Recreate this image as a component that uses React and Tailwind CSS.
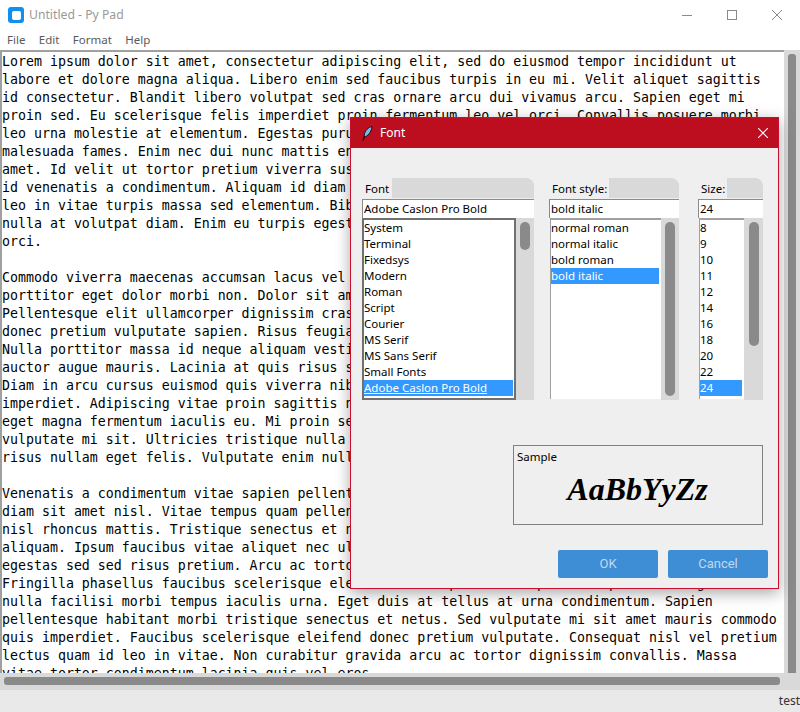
const lines = [
"Lorem ipsum dolor sit amet, consectetur adipiscing elit, sed do eiusmod tempor incididunt ut",
"labore et dolore magna aliqua. Libero enim sed faucibus turpis in eu mi. Velit aliquet sagittis",
"id consectetur. Blandit libero volutpat sed cras ornare arcu dui vivamus arcu. Sapien eget mi",
"proin sed. Eu scelerisque felis imperdiet proin fermentum leo vel orci. Convallis posuere morbi",
"leo urna molestie at elementum. Egestas purus viverra accumsan in nisl nisi scelerisque eu",
"malesuada fames. Enim nec dui nunc mattis enim ut tellus elementum sagittis vitae et leo duis",
"amet. Id velit ut tortor pretium viverra suspendisse potenti nullam ac tortor vitae purus",
"id venenatis a condimentum. Aliquam id diam maecenas ultricies mi eget mauris pharetra et",
"leo in vitae turpis massa sed elementum. Bibendum est ultricies integer quis auctor elit sed",
"nulla at volutpat diam. Enim eu turpis egestas pretium aenean pharetra magna ac placerat",
"orci.",
" ",
"Commodo viverra maecenas accumsan lacus vel facilisis volutpat est velit egestas dui id ornare",
"porttitor eget dolor morbi non. Dolor sit amet consectetur adipiscing elit pellentesque",
"Pellentesque elit ullamcorper dignissim cras tincidunt lobortis feugiat vivamus at augue eget",
"donec pretium vulputate sapien. Risus feugiat in ante metus dictum at tempor commodo",
"Nulla porttitor massa id neque aliquam vestibulum morbi blandit cursus risus at ultrices",
"auctor augue mauris. Lacinia at quis risus sed vulputate odio ut enim blandit volutpat",
"Diam in arcu cursus euismod quis viverra nibh cras pulvinar mattis nunc sed blandit libero",
"imperdiet. Adipiscing vitae proin sagittis nisl rhoncus mattis rhoncus urna neque viverra",
"eget magna fermentum iaculis eu. Mi proin sed libero enim sed faucibus turpis in eu mi",
"vulputate mi sit. Ultricies tristique nulla aliquet enim tortor at auctor urna nunc id",
"risus nullam eget felis. Vulputate enim nulla aliquet porttitor lacus luctus accumsan",
" ",
"Venenatis a condimentum vitae sapien pellentesque habitant morbi tristique senectus et netus",
"diam sit amet nisl. Vitae tempus quam pellentesque nec nam aliquam sem et tortor consequat",
"nisl rhoncus mattis. Tristique senectus et netus et malesuada fames ac turpis egestas sed",
"aliquam. Ipsum faucibus vitae aliquet nec ullamcorper sit amet risus nullam eget felis eget",
"egestas sed sed risus pretium. Arcu ac tortor dignissim convallis aenean et tortor at risus",
"Fringilla phasellus faucibus scelerisque eleifend donec pretium vulputate sapien nec sagittis",
"nulla facilisi morbi tempus iaculis urna. Eget duis at tellus at urna condimentum. Sapien",
"pellentesque habitant morbi tristique senectus et netus. Sed vulputate mi sit amet mauris commodo",
"quis imperdiet. Faucibus scelerisque eleifend donec pretium vulputate. Consequat nisl vel pretium",
"lectus quam id leo in vitae. Non curabitur gravida arcu ac tortor dignissim convallis. Massa",
"vitae tortor condimentum lacinia quis vel eros",
];

const fonts = ["System","Terminal","Fixedsys","Modern","Roman","Script","Courier","MS Serif","MS Sans Serif","Small Fonts","Adobe Caslon Pro Bold"];
const styles = ["normal roman","normal italic","bold roman","bold italic"];
const sizes = ["8","9","10","11","12","14","16","18","20","22","24"];

function Column({ label, labelW, value, items, selected, listW, strong, underline, thumbH, width }) {
  return (
    <div className="flex flex-col" style={{ width }}>
      <div className="flex h-5 rounded-tr-lg bg-[#d9d9d9]">
        <div className="flex h-5 items-end whitespace-nowrap bg-[#efefef] pb-px pl-[3px]" style={{ width: labelW }}>{label}</div>
      </div>
      <div className="mt-px h-[19px] border-t border-l border-[#8a8a8a] bg-white pl-px leading-[18px]">{value}</div>
      <div className="flex h-[182px]">
        <div
          className={`shrink-0 overflow-hidden bg-white ${strong ? "h-full border-2 border-[#707070]" : "ml-px h-[181px] border-t-2 border-l border-t-[#a0a0a0] border-l-[#a0a0a0] pr-[2px]"}`}
          style={{ width: listW }}
        >
          <div className={strong ? "pr-px" : ""}>
            {items.map((t) => (
              <div key={t} className={`h-4 whitespace-pre leading-4 ${t === selected ? "bg-[#3399ff] text-white" : "text-black"}`}>
                <span className={t === selected && underline ? "underline" : ""}>{t}</span>
              </div>
            ))}
          </div>
        </div>
        <div className="flex flex-1 justify-center bg-[#d9d9d9] pt-1">
          <div className="w-[10px] rounded-[5px] bg-[#8a8a8a]" style={{ height: thumbH }} />
        </div>
      </div>
    </div>
  );
}

function Feather() {
  return (
    <svg width="11" height="15" viewBox="0 0 11 15">
      <path d="M10 0.6 C6.5 1 2.8 4.6 2.2 9 L2.2 11 C5.5 10.6 9.4 6.2 10 0.6 Z" fill="#7fb6ea" stroke="#101010" strokeWidth="1" />
      <path d="M2.4 10.5 L1 14.5" stroke="#101010" strokeWidth="1.3" />
    </svg>
  );
}

export default function App() {
  return (
    <div className="relative flex h-[712px] w-[800px] flex-col overflow-hidden bg-white font-['Noto_Sans',sans-serif] text-[11.5px] text-black">
      <header className="flex h-[30px] shrink-0 items-center bg-white pl-[8px]">
        <div className="flex h-[16px] w-[16px] items-center justify-center rounded-[3px] bg-[#0f90f0]">
          <div className="h-[9px] w-[9px] rounded-[2px] bg-white" />
        </div>
        <span className="ml-[5px] text-[12.2px] text-[#999999]">Untitled - Py Pad</span>
        <div className="ml-auto flex items-center text-[#7f7f7f]">
          <div className="mr-[35px] h-px w-[10px] bg-[#8a8a8a]" />
          <div className="mr-[35px] h-[10px] w-[10px] border border-[#8a8a8a]" />
          <svg className="mr-[18px]" width="10" height="10" viewBox="0 0 10 10">
            <path d="M0 0 L10 10 M10 0 L0 10" stroke="#8a8a8a" strokeWidth="1" />
          </svg>
        </div>
      </header>
      <nav className="flex h-[20px] shrink-0 items-center gap-[13.4px] bg-white pb-px pl-[7px] text-[#5a5a5a]">
        <span>File</span><span>Edit</span><span>Format</span><span>Help</span>
      </nav>
      <div className="flex min-h-0 flex-1 bg-[#d9d9d9]">
        <div className="h-[623px] w-[784px] overflow-hidden border-t-2 border-l-2 border-t-[#a0a0a0] border-l-[#a0a0a0] bg-white pt-px font-['DejaVu_Sans_Mono',monospace] text-[13.28px] leading-[18px] text-black">
          {lines.map((l, i) => (
            <div key={i} className="h-[18px] whitespace-pre">{l}</div>
          ))}
        </div>
        <div className="flex flex-1 justify-center pt-[4px]">
          <div className="h-[621px] w-2 rounded-[3px] bg-[#8a8a8a]" />
        </div>
      </div>
      <div className="h-[17px] shrink-0 bg-[#d9d9d9] pt-[4px] pl-[4px]">
        <div className="h-2 w-[776px] rounded-[3px] bg-[#8a8a8a]" />
      </div>
      <footer className="flex h-[22px] shrink-0 items-center justify-end bg-[#e9e9e9] text-[12px] text-[#333333]">test</footer>

      <div className="absolute top-[117px] left-[350px] flex h-[472px] w-[429px] flex-col border border-[#c8102e] bg-[#efefef] shadow-[0_4px_14px_rgba(0,0,0,0.35)]">
        <div className="flex h-[30px] shrink-0 items-center bg-[#bd0e1f] pl-[11px] text-[12px] text-white">
          <Feather />
          <span className="ml-[7px]">Font</span>
          <svg className="mr-[10px] ml-auto" width="10" height="10" viewBox="0 0 10 10">
            <path d="M0 0 L10 10 M10 0 L0 10" stroke="#ffffff" strokeWidth="1.1" />
          </svg>
        </div>
        <div className="flex flex-1 flex-col pt-[30px] pr-[10px] pl-[11px]">
          <div className="flex items-start">
            <Column width={172} label="Font" labelW={30} value="Adobe Caslon Pro Bold" items={fonts} selected="Adobe Caslon Pro Bold" listW={154} strong underline thumbH={28} />
            <div className="ml-[15px]">
              <Column width={130} label="Font style:" labelW={60} value="bold italic" items={styles} selected="bold italic" listW={111} thumbH={174} />
            </div>
            <div className="ml-[19px]">
              <Column width={65} label="Size:" labelW={29} value="24" items={sizes} selected="24" listW={45} thumbH={124} />
            </div>
          </div>
          <div className="mt-[45px] mr-[5px] ml-[151px] flex h-[80px] flex-col border border-[#808080]">
            <span className="pt-[3px] pl-[3px] leading-4">Sample</span>
            <div className="mt-[6px] pr-px text-center font-['Liberation_Serif',serif] text-[32px] leading-[36px] font-bold italic">AaBbYyZz</div>
          </div>
          <div className="mt-[25px] flex justify-end gap-[10px] font-['Roboto',sans-serif] text-[13px] text-[#c0d9f0]">
            <button className="h-[28px] w-[100px] rounded-[2px] bg-[#3d8ed4]">OK</button>
            <button className="h-[28px] w-[100px] rounded-[2px] bg-[#3d8ed4]">Cancel</button>
          </div>
        </div>
      </div>
    </div>
  );
}
